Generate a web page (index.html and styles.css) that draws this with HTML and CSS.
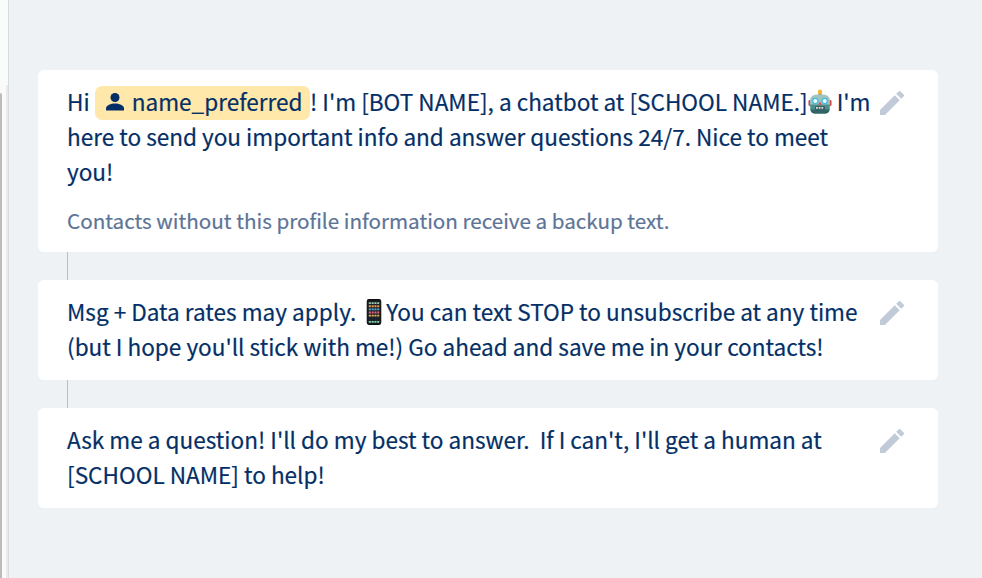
FILE: index.html
```html
<!DOCTYPE html>
<html lang="en">
<head>
    <meta charset="UTF-8">
    <meta name="viewport" content="width=device-width, initial-scale=1.0">
    <title>Welcome Messages</title>
    <link rel="stylesheet" href="styles.css">
</head>
<body>
    <div class="page">
        <div class="side">
            <div class="side-top"></div>
            <div class="side-scroll">
                <div class="thumb"></div>
                <div class="track"></div>
            </div>
        </div>

        <div class="messages">
            <div class="card">
                <div class="text">
                    <p>Hi <span class="tag"><svg class="person" viewBox="3 3 18 18"><circle cx="12" cy="7.500" r="4.500"/><path d="M3 20.500v-2.300c0-3 5-4.700 9-4.700s9 1.700 9 4.700v2.300z"/></svg>name_preferred</span>! I'm [BOT NAME], a chatbot at [SCHOOL NAME.]<svg class="robot" viewBox="0 0 24 25">
                        <rect x=".5" y="11" width="3" height="6" rx="1.200" fill="#c94b45"/>
                        <rect x="20.500" y="11" width="3" height="6" rx="1.200" fill="#c94b45"/>
                        <path d="M10.500 6V4h3v2z" fill="#d8483b"/>
                        <circle cx="12" cy="2.800" r="2.200" fill="#f5b82e"/>
                        <path d="M6 6Q12 4.500 18 6Q22 7.500 22 12L21.500 21Q20.500 24.500 17 24.500H7Q3.500 24.500 2.500 21L2 12Q2 7.500 6 6z" fill="#9fc4bf"/>
                        <path d="M2.200 15.500H21.800L21.500 21Q20.500 24.500 17 24.500H7Q3.500 24.500 2.500 21z" fill="#4b8f8f"/>
                        <path d="M2.400 20.500H21.600Q21 24.500 17 24.500H7Q3 24.500 2.400 20.500z" fill="#2f6568"/>
                        <circle cx="7.300" cy="12" r="3.300" fill="#48b9de"/>
                        <circle cx="16.700" cy="12" r="3.300" fill="#48b9de"/>
                        <circle cx="7.300" cy="12" r="2" fill="#effcff"/>
                        <circle cx="16.700" cy="12" r="2" fill="#effcff"/>
                        <path d="M12 12.500l1.800 3.200h-3.600z" fill="#e44a3c"/>
                        <rect x="7" y="17.300" width="10" height="3.200" rx="1" fill="#3d5356"/>
                        <path d="M8 18.900h8" stroke="#dfe6dc" stroke-width="1.600" stroke-dasharray="1.800 .9"/>
                    </svg> I'm<br>
                    here to send you important info and answer questions 24/7. Nice to meet<br>
                    you!</p>
                    <p class="note">Contacts without this profile information receive a backup text.</p>
                </div>
                <svg class="edit" viewBox="3 3 18 18"><path d="M3 17.250V21h3.750L17.810 9.940l-3.750-3.750L3 17.250zM20.710 7.040a1 1 0 0 0 0-1.410l-2.340-2.340a1 1 0 0 0-1.410 0l-1.830 1.830 3.750 3.750 1.830-1.830z"/></svg>
            </div>
            <div class="line"></div>

            <div class="card">
                <div class="text">
                    <p>Msg + Data rates may apply. <svg class="phone" viewBox="0 0 14 25">
                        <rect x=".5" y=".5" width="13" height="24" rx="1.800" fill="#17191c" stroke="#0b0c0d"/>
                        <rect x="1.500" y="2.500" width="11" height="20" fill="#1c222b"/>
                        <g stroke-width="1.800" stroke-dasharray="2 .7">
                            <path d="M2 4h10" stroke="#9ccbb0"/>
                            <path d="M2 7h10" stroke="#e79a48"/>
                            <path d="M2 10h10" stroke="#58a9d5"/>
                            <path d="M2 13h10" stroke="#e95f78"/>
                            <path d="M2 16h10" stroke="#e8b457"/>
                            <path d="M2 22h10" stroke="#80d9a4"/>
                        </g>
                    </svg>You can text STOP to unsubscribe at any time<br>
                    (but I hope you'll stick with me!) Go ahead and save me in your contacts!</p>
                </div>
                <svg class="edit" viewBox="3 3 18 18"><path d="M3 17.250V21h3.750L17.810 9.940l-3.750-3.750L3 17.250zM20.710 7.040a1 1 0 0 0 0-1.410l-2.340-2.340a1 1 0 0 0-1.410 0l-1.830 1.830 3.750 3.750 1.830-1.830z"/></svg>
            </div>
            <div class="line"></div>

            <div class="card">
                <div class="text">
                    <p>Ask me a question! I'll do my best to answer.&nbsp; If I can't, I'll get a human at<br>
                    [SCHOOL NAME] to help!</p>
                </div>
                <svg class="edit" viewBox="3 3 18 18"><path d="M3 17.250V21h3.750L17.810 9.940l-3.750-3.750L3 17.250zM20.710 7.040a1 1 0 0 0 0-1.410l-2.340-2.340a1 1 0 0 0-1.410 0l-1.830 1.830 3.750 3.750 1.830-1.830z"/></svg>
            </div>
        </div>
    </div>
</body>
</html>
```

FILE: styles.css
```css
* {
    box-sizing: border-box;
    margin: 0;
    padding: 0;
}
body {
    font-family: 'Noto Sans CJK SC', 'Open Sans', sans-serif;
    color: #042f66;
    background: #eef2f5;
    overflow: hidden;
}
.page {
    display: flex;
    height: 578px;
}
.side {
    display: flex;
    flex-direction: column;
    flex-shrink: 0;
    width: 9px;
    background: #fafcfb;
    border-right: 1px solid #d9dde1;
}
.side-top {
    height: 85px;
}
.side-scroll {
    flex: 1;
    display: flex;
    justify-content: space-between;
    background: #fafafa;
}
.thumb {
    width: 2px;
    margin-top: 8px;
    background: #bcbcbc;
    border-top-right-radius: 2px;
}
.track {
    width: 2px;
    background: #e9eaeb;
}
.messages {
    flex: 1;
    min-width: 0;
    padding: 70px 44px 0 29px;
}
.card {
    display: flex;
    justify-content: space-between;
    background: white;
    border-radius: 6px;
    padding: 14px 34px 16px 29px;
}
.text {
    font-size: 22.57px;
    line-height: 35px;
    white-space: nowrap;
    -webkit-text-stroke: 0.2px;
}
.tag {
    display: inline-flex;
    align-items: center;
    height: 34px;
    margin: 2px 0 -1px;
    padding: 0 7.5px 2px 11px;
    border-radius: 7px;
    background: #ffe8a9;
    line-height: 34px;
    vertical-align: top;
}
.person {
    width: 18px;
    height: 18px;
    margin-right: 8px;
    fill: #042f66;
}
.robot {
    width: 24px;
    height: 25px;
    vertical-align: -3px;
}
.phone {
    width: 16px;
    height: 26px;
    margin: 0 4px 0 5px;
    vertical-align: -4px;
}
.note {
    margin: 14px 0 -2px;
    font-size: 20.63px;
    color: #5d7497;
}
.edit {
    width: 24px;
    height: 24px;
    margin-top: 7px;
    flex-shrink: 0;
    fill: #c1cad8;
}
.line {
    width: 1px;
    height: 28px;
    margin-left: 29px;
    background: #b3bec8;
}
```
